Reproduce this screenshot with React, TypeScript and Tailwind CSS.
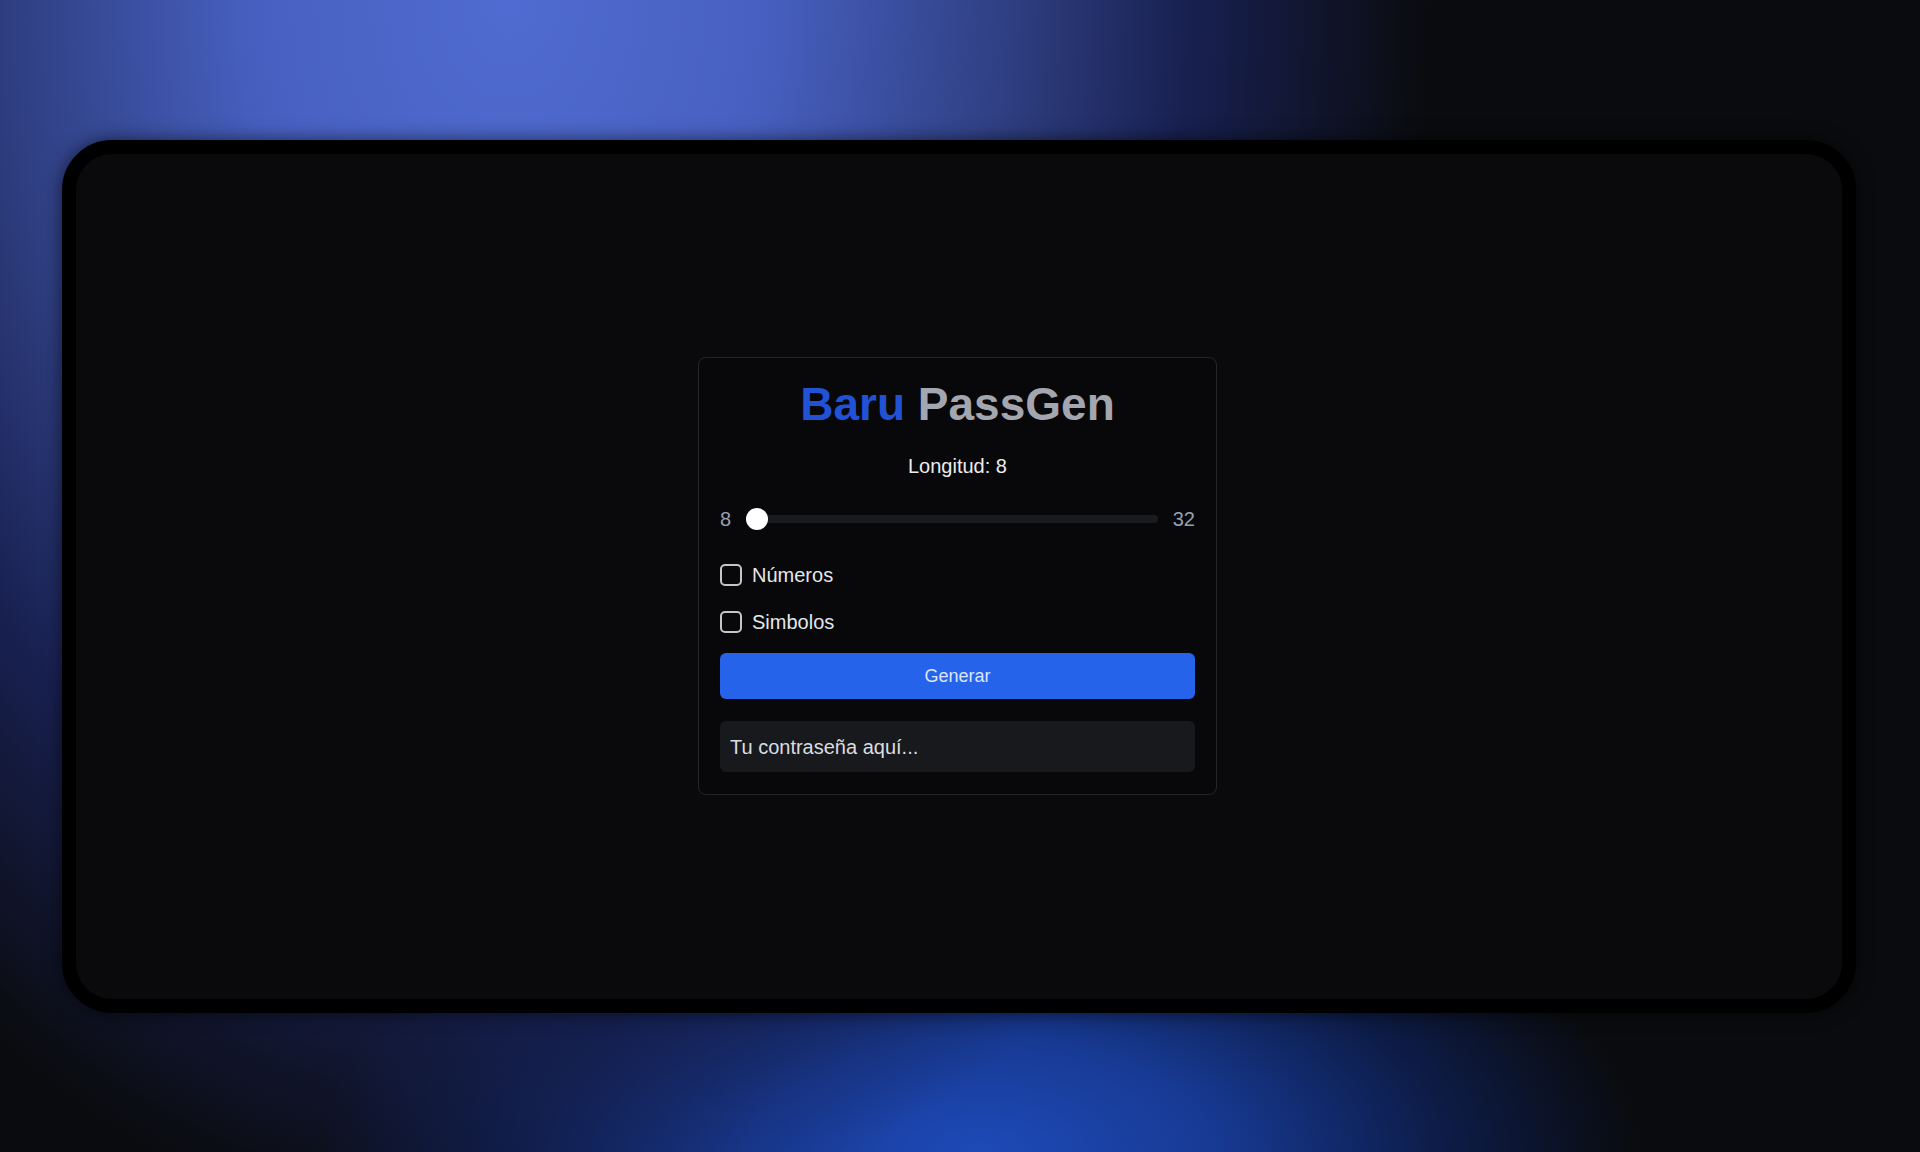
import React, { useState } from "react";

const font = "font-['Liberation_Sans','Helvetica',sans-serif]";

const Option: React.FC<{ label: string; checked: boolean; onToggle: () => void; className?: string }> = ({
  label,
  checked,
  onToggle,
  className = "",
}) => {
  return (
    <label className={`flex items-center h-[28px] gap-[10px] cursor-pointer ${className}`} onClick={onToggle}>
      <span
        className={`w-[22px] h-[22px] rounded-[5px] border-2 border-[#c4c5c9] flex items-center justify-center ${
          checked ? "bg-[#2563eb]" : "bg-transparent"
        }`}
      />
      <span className="text-[20px] leading-[28px] text-[#e6e6e9]">{label}</span>
    </label>
  );
};

export default function App() {
  const [length, setLength] = useState(8);
  const [numbers, setNumbers] = useState(false);
  const [symbols, setSymbols] = useState(false);

  return (
    <div
      className={`${font} w-full h-[1152px] flex items-center justify-center bg-[#0a0b0e] bg-[image:radial-gradient(ellipse_920px_1250px_at_510px_0px,#506bd1_0%,#4760c0_28%,#2f3f82_54%,#182050_74%,transparent_100%),radial-gradient(ellipse_660px_320px_at_980px_1152px,#1e4ab8_0%,#173a94_35%,#0d1c48_70%,transparent_100%)]`}
    >
      <div className="w-[1794px] h-[873px] ml-[-2px] rounded-[50px] border-[14px] border-black bg-[#0a0a0c] flex items-center justify-center shadow-[0_0_18px_rgba(0,0,0,0.6)]">
        <div className="w-[519px] ml-[-3px] rounded-lg border border-[#23252a] bg-[#08080a] px-[21px] pt-[18px] pb-[22px] flex flex-col">
          <h1 className="text-center text-[46px] leading-[56px] font-bold">
            <span className="text-[#2152d6]">Baru</span> <span className="text-[#a3a6ae]">PassGen</span>
          </h1>

          <p className="mt-[20px] text-center text-[20px] leading-[28px] text-[#ececee]">Longitud: {length}</p>

          <div className="mt-[25px] flex items-center h-[28px] gap-[15px]">
            <span className="text-[20px] text-[#96a0b3]">8</span>
            <input
              type="range"
              min={8}
              max={32}
              value={length}
              onChange={(e) => setLength(Number(e.target.value))}
              className="flex-1 h-[8px] appearance-none rounded-full bg-[#1a1b1e] outline-none [&::-webkit-slider-thumb]:appearance-none [&::-webkit-slider-thumb]:w-[22px] [&::-webkit-slider-thumb]:h-[22px] [&::-webkit-slider-thumb]:rounded-full [&::-webkit-slider-thumb]:bg-white"
            />
            <span className="text-[20px] text-[#96a0b3]">32</span>
          </div>

          <Option className="mt-[28px]" label="Números" checked={numbers} onToggle={() => setNumbers(!numbers)} />
          <Option className="mt-[19px]" label="Simbolos" checked={symbols} onToggle={() => setSymbols(!symbols)} />

          <button className="mt-[17px] h-[46px] rounded-md bg-[#2563eb] text-[18px] text-[#dce6ff]">Generar</button>

          <div className="mt-[22px] h-[51px] rounded-md bg-[#18191c] px-[10px] flex items-center text-[20px] text-[#dcdde0]">
            Tu contraseña aquí...
          </div>
        </div>
      </div>
    </div>
  );
}
